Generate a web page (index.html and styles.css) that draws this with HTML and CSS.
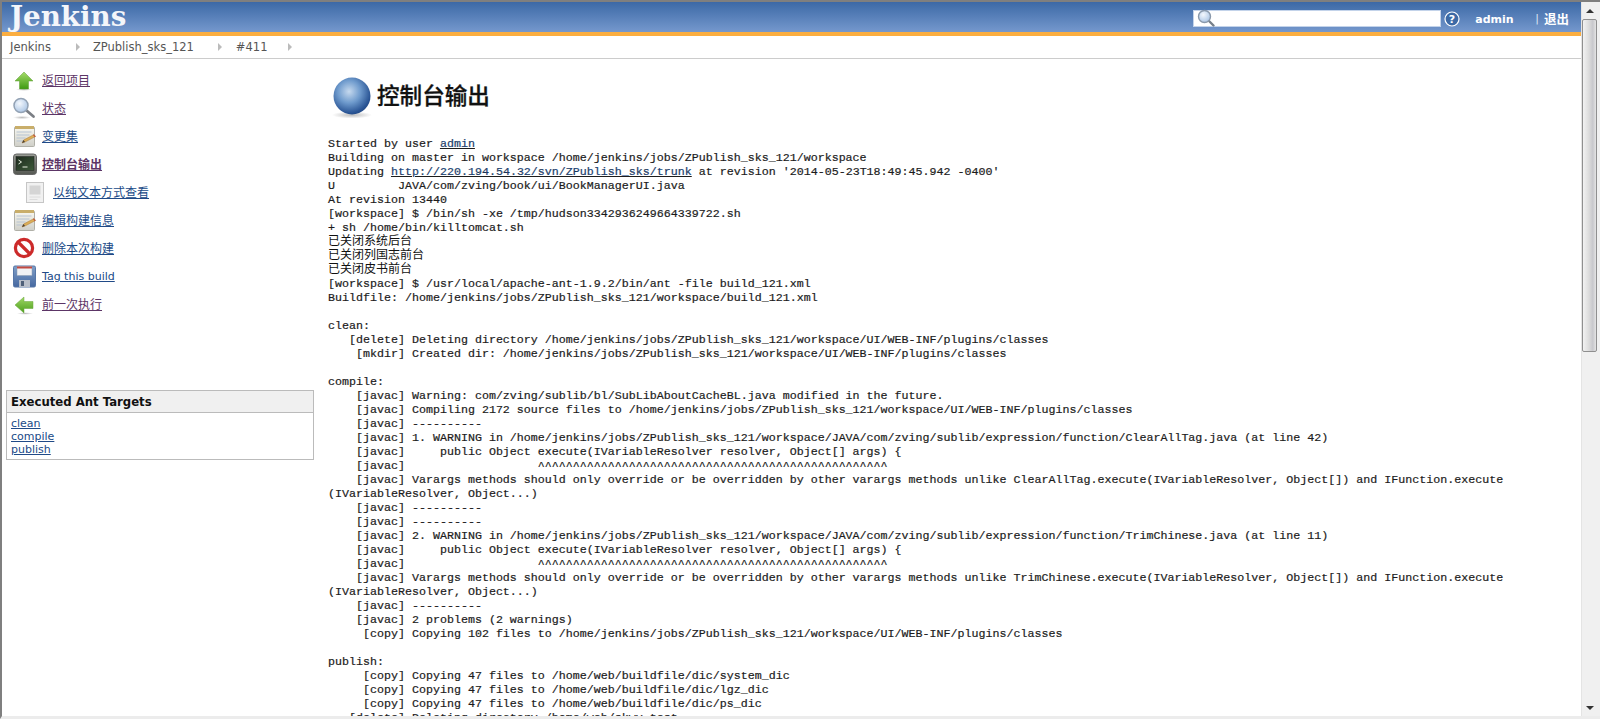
FILE: index.html
```html
<!DOCTYPE html>
<html lang="zh">
<head>
<meta charset="utf-8">
<title>ZPublish_sks_121 #411 Console</title>
<link rel="stylesheet" href="styles.css">
</head>
<body>
<svg class="defs" aria-hidden="true">
  <defs>
    <linearGradient id="gGreen" x1="0" y1="0" x2="0" y2="1"><stop offset="0" stop-color="#a5dc6a"/><stop offset="1" stop-color="#3f9a12"/></linearGradient>
    <linearGradient id="gGreenL" x1="0" y1="0" x2="0" y2="1"><stop offset="0" stop-color="#9fd864"/><stop offset="1" stop-color="#4c9e1c"/></linearGradient>
    <radialGradient id="gLens" cx=".4" cy=".35" r=".7"><stop offset="0" stop-color="#f4f8fd"/><stop offset="1" stop-color="#a9c4e4"/></radialGradient>
    <linearGradient id="gPaper" x1="0" y1="0" x2="0" y2="1"><stop offset="0" stop-color="#f9f8f0"/><stop offset="1" stop-color="#cfcfc8"/></linearGradient>
    <linearGradient id="gTerm" x1="0" y1="0" x2="0" y2="1"><stop offset="0" stop-color="#9a9e96"/><stop offset="1" stop-color="#555852"/></linearGradient>
    <linearGradient id="gScreen" x1="0" y1="0" x2="1" y2="1"><stop offset="0" stop-color="#1d2a1d"/><stop offset="1" stop-color="#3d5a3a"/></linearGradient>
    <linearGradient id="gDisk" x1="0" y1="0" x2="0" y2="1"><stop offset="0" stop-color="#7f9fc8"/><stop offset="1" stop-color="#4668a0"/></linearGradient>
    <radialGradient id="gBall" cx=".42" cy=".38" r=".68"><stop offset="0" stop-color="#c6d9ee"/><stop offset=".45" stop-color="#6f9bcd"/><stop offset=".85" stop-color="#2a5595"/><stop offset="1" stop-color="#1f447d"/></radialGradient>
    <radialGradient id="gShadow"><stop offset="0" stop-color="#999" stop-opacity=".65"/><stop offset="1" stop-color="#999" stop-opacity="0"/></radialGradient>
    <symbol id="iNotepad" viewBox="0 0 24 24">
      <rect x="1.5" y="3" width="20" height="19.5" rx="1" fill="url(#gPaper)" stroke="#b0b0a8"/>
      <rect x="2" y="2" width="19" height="3" fill="#c9ae6a"/>
      <path d="M3.5 8h15M3.5 11h13M3.5 14h9M3.5 17h7" stroke="#b7c4d2" stroke-width="1"/>
      <path d="M9 19l1.6-3L21 10.5l1.6 2L12 18z" fill="#dcae55" stroke="#a97a3c" stroke-width=".5"/>
      <path d="M20 11l1-.5 1.6 2-1 .6z" fill="#c2483e"/>
      <path d="M9 19l1.6-3 1.4 2z" fill="#4a4036"/>
    </symbol>
  </defs>
</svg>
<div class="window">
  <div class="page">
    <header class="topbar">
      <a class="logo">Jenkins</a>
      <div class="topbar-right">
        <div class="search">
          <svg class="search-icon" viewBox="0 0 18 18" width="18" height="18"><path d="M11.5 11.5l5 5" stroke="#77808a" stroke-width="2.4" stroke-linecap="round"/><circle cx="7.5" cy="7.5" r="6" fill="url(#gLens)" stroke="#8a99ab" stroke-width="1.4"/></svg>
        </div>
        <svg class="help" viewBox="0 0 16 16" width="16" height="16"><circle cx="8" cy="8" r="7" fill="#3d6aa6" stroke="#fff" stroke-width="1.2"/><text x="8" y="12" text-anchor="middle" class="help-q">?</text></svg>
        <a class="user">admin</a>
        <span class="sep">|</span>
        <a class="logout">退出</a>
      </div>
    </header>
    <div class="orange"></div>
    <nav class="crumbs">
      <a class="crumb c1">Jenkins</a><i class="arrow a1"></i>
      <a class="crumb c2">ZPublish_sks_121</a><i class="arrow a2"></i>
      <a class="crumb c3">#411</a><i class="arrow a3"></i>
    </nav>
    <div class="content">
      <aside class="side">
        <ul class="tasks">
          <li class="task">
            <svg class="ico" viewBox="0 0 24 24"><ellipse cx="11" cy="21.5" rx="8" ry="1.4" fill="url(#gShadow)"/><path d="M11 4l9 9h-4.5v8h-9v-8H2z" fill="url(#gGreen)" stroke="#5d9c32" stroke-width=".5"/></svg>
            <a class="link cn visited">返回项目</a>
          </li>
          <li class="task">
            <svg class="ico" viewBox="0 0 24 24"><ellipse cx="9" cy="21.5" rx="9" ry="1.6" fill="url(#gShadow)"/><path d="M13.5 14.5l7 6" stroke="#7b7f85" stroke-width="2.8" stroke-linecap="round"/><circle cx="8" cy="9.5" r="7" fill="url(#gLens)" stroke="#93a2b4" stroke-width="1.5"/></svg>
            <a class="link cn visited">状态</a>
          </li>
          <li class="task">
            <svg class="ico"><use href="#iNotepad"/></svg>
            <a class="link cn">变更集</a>
          </li>
          <li class="task">
            <svg class="ico" viewBox="0 0 24 24"><rect x="0.5" y="2" width="23" height="20.5" rx="3" fill="url(#gTerm)" stroke="#666"/><rect x="3" y="4.5" width="18" height="14" fill="url(#gScreen)" stroke="#222" stroke-width=".5"/><path d="M5.5 8l3 2-3 2" fill="none" stroke="#e8f0e0" stroke-width="1"/><path d="M9.5 15h5" stroke="#e8f0e0" stroke-width="1"/></svg>
            <a class="link cn visited strong">控制台输出</a>
          </li>
          <li class="task sub">
            <svg class="ico-sub" viewBox="0 0 18 21"><rect x=".5" y=".5" width="17" height="20" fill="#f1f1f1" stroke="#c6c6c6"/><rect x="3.5" y="3.5" width="11" height="9" fill="#d5d5d5"/><path d="M3.5 15h11M3.5 17.5h8" stroke="#dcdcdc"/></svg>
            <a class="link cn">以纯文本方式查看</a>
          </li>
          <li class="task">
            <svg class="ico"><use href="#iNotepad"/></svg>
            <a class="link cn">编辑构建信息</a>
          </li>
          <li class="task">
            <svg class="ico" viewBox="0 0 24 24"><circle cx="11" cy="12" r="8.6" fill="#fff" stroke="#cc2a2a" stroke-width="3.2"/><path d="M5 6l12 12" stroke="#cc2a2a" stroke-width="3.2"/></svg>
            <a class="link cn">删除本次构建</a>
          </li>
          <li class="task">
            <svg class="ico" viewBox="0 0 24 24"><rect x=".5" y="2" width="22" height="21" rx="1.5" fill="url(#gDisk)" stroke="#5676a6"/><rect x="4" y="2.5" width="15" height="9" fill="#f1f2f4" stroke="#8d9bb0" stroke-width=".5"/><rect x="4" y="2.5" width="15" height="2" fill="#c24a42"/><rect x="6" y="16" width="11" height="7" fill="#b9bfc9"/><rect x="8" y="17" width="3" height="5" fill="#4f6078"/></svg>
            <a class="link">Tag this build</a>
          </li>
          <li class="task">
            <svg class="ico" viewBox="0 0 24 24"><ellipse cx="12" cy="21.5" rx="8" ry="1.3" fill="url(#gShadow)"/><path d="M2 13l9-8v4.5h9v7h-9V21z" fill="url(#gGreenL)" stroke="#68a53c" stroke-width=".5"/></svg>
            <a class="link cn visited">前一次执行</a>
          </li>
        </ul>
        <section class="box">
          <h2 class="box-title">Executed Ant Targets</h2>
          <div class="box-body">
            <a class="box-link">clean</a>
            <a class="box-link">compile</a>
            <a class="box-link">publish</a>
          </div>
        </section>
      </aside>
      <main class="main">
        <h1 class="heading">
          <svg class="ball" viewBox="0 0 48 48" width="48" height="48"><ellipse cx="24" cy="43" rx="20" ry="3.5" fill="url(#gShadow)"/><circle cx="24" cy="24" r="18.5" fill="url(#gBall)"/></svg>
          <span>控制台输出</span>
        </h1>
<pre class="console">Started by user <a class="con-link">admin</a>
Building on master in workspace /home/jenkins/jobs/ZPublish_sks_121/workspace
Updating <a class="con-link">http://220.194.54.32/svn/ZPublish_sks/trunk</a> at revision '2014-05-23T18:49:45.942 -0400'
U         JAVA/com/zving/book/ui/BookManagerUI.java
At revision 13440
[workspace] $ /bin/sh -xe /tmp/hudson3342936249664339722.sh
+ sh /home/bin/killtomcat.sh
<span class="cjk">已关闭系统后台</span>
<span class="cjk">已关闭列国志前台</span>
<span class="cjk">已关闭皮书前台</span>
[workspace] $ /usr/local/apache-ant-1.9.2/bin/ant -file build_121.xml
Buildfile: /home/jenkins/jobs/ZPublish_sks_121/workspace/build_121.xml

clean:
   [delete] Deleting directory /home/jenkins/jobs/ZPublish_sks_121/workspace/UI/WEB-INF/plugins/classes
    [mkdir] Created dir: /home/jenkins/jobs/ZPublish_sks_121/workspace/UI/WEB-INF/plugins/classes

compile:
    [javac] Warning: com/zving/sublib/bl/SubLibAboutCacheBL.java modified in the future.
    [javac] Compiling 2172 source files to /home/jenkins/jobs/ZPublish_sks_121/workspace/UI/WEB-INF/plugins/classes
    [javac] ----------
    [javac] 1. WARNING in /home/jenkins/jobs/ZPublish_sks_121/workspace/JAVA/com/zving/sublib/expression/function/ClearAllTag.java (at line 42)
    [javac]     public Object execute(IVariableResolver resolver, Object[] args) {
    [javac]                   ^^^^^^^^^^^^^^^^^^^^^^^^^^^^^^^^^^^^^^^^^^^^^^^^^^
    [javac] Varargs methods should only override or be overridden by other varargs methods unlike ClearAllTag.execute(IVariableResolver, Object[]) and IFunction.execute
(IVariableResolver, Object...)
    [javac] ----------
    [javac] ----------
    [javac] 2. WARNING in /home/jenkins/jobs/ZPublish_sks_121/workspace/JAVA/com/zving/sublib/expression/function/TrimChinese.java (at line 11)
    [javac]     public Object execute(IVariableResolver resolver, Object[] args) {
    [javac]                   ^^^^^^^^^^^^^^^^^^^^^^^^^^^^^^^^^^^^^^^^^^^^^^^^^^
    [javac] Varargs methods should only override or be overridden by other varargs methods unlike TrimChinese.execute(IVariableResolver, Object[]) and IFunction.execute
(IVariableResolver, Object...)
    [javac] ----------
    [javac] 2 problems (2 warnings)
     [copy] Copying 102 files to /home/jenkins/jobs/ZPublish_sks_121/workspace/UI/WEB-INF/plugins/classes

publish:
     [copy] Copying 47 files to /home/web/buildfile/dic/system_dic
     [copy] Copying 47 files to /home/web/buildfile/dic/lgz_dic
     [copy] Copying 47 files to /home/web/buildfile/dic/ps_dic
   [delete] Deleting directory /home/web/skwy_test</pre>
      </main>
    </div>
  </div>
  <div class="scrollbar">
    <div class="sb-btn"><i class="sb-up"></i></div>
    <div class="sb-thumb"></div>
    <div class="sb-track"></div>
    <div class="sb-btn"><i class="sb-down"></i></div>
  </div>
</div>
</body>
</html>
```
FILE: styles.css
```css
* { box-sizing: border-box; }
html, body { margin: 0; padding: 0; height: 719px; overflow: hidden; background: #fff; }
body { font-family: "DejaVu Sans", "Noto Sans CJK SC", sans-serif; font-size: 11px; color: #333; }
.defs { display: block; width: 0; height: 0; }
a { cursor: pointer; }

.window {
  display: flex;
  height: 719px;
  border-top: 2px solid #7f7f7f;
  border-left: 2px solid #7f7f7f;
  border-bottom: 3px solid #ececec;
}
.page { flex: 1; min-width: 0; display: flex; flex-direction: column; overflow: hidden; }

.topbar {
  flex: none;
  height: 30px;
  display: flex;
  align-items: center;
  justify-content: space-between;
  background: linear-gradient(#3c69a6, #7598cd);
}
.logo {
  margin-left: 8px;
  font: bold 27.7px/30px "DejaVu Serif", "Liberation Serif", serif;
  color: #f4f6fa;
}
.topbar-right { display: flex; align-items: center; padding: 3px 12px 0 0; color: #fff; }
.search {
  width: 248px;
  height: 17px;
  background: #fff;
  border: 1px solid #c3d3ea;
  padding-left: 3px;
  display: flex;
  align-items: center;
}
.search-icon { display: block; flex: none; margin-top: -1px; }
.help { margin-left: 3px; display: block; }
.help-q { font: bold 11px "DejaVu Sans", sans-serif; fill: #fff; }
.user { margin-left: 15px; font-weight: bold; color: #fff; width: 40px; padding-top: 1px; }
.sep { margin-left: 20px; font-size: 11px; color: #dfe7f4; }
.logout { margin-left: 5px; font: bold 12.5px "Noto Sans CJK SC", sans-serif; color: #fff; }

.orange { flex: none; height: 4px; background: #fbae40; }

.crumbs {
  flex: none;
  height: 23px;
  border-bottom: 1px solid #ccc;
  display: flex;
  align-items: center;
  padding-left: 8px;
  background: #fff;
  font-size: 11.5px;
}
.crumb { color: #555; }
.arrow { width: 0; height: 0; border-left: 4px solid #bbb; border-top: 4px solid transparent; border-bottom: 4px solid transparent; }
.a1 { margin: 0 13px 0 25px; }
.a2 { margin: 0 13.5px 0 24.5px; }
.a3 { margin-left: 21px; }

.content { flex: 1; min-height: 0; display: flex; overflow: hidden; }
.side { flex: none; width: 318px; padding-top: 7px; }
.tasks { list-style: none; margin: 0; padding: 0; }
.task { height: 28px; display: flex; align-items: center; padding-left: 11px; }
.task.sub { padding-left: 24px; }
.ico { width: 24px; height: 24px; flex: none; margin-right: 5px; }
.ico-sub { width: 18px; height: 21px; flex: none; margin-right: 9px; }
.link { color: #204a87; text-decoration: underline; font-size: 11px; }
.cn { font-size: 12px; padding-bottom: 2px; }
.visited { color: #5c3566; }
.strong { font-weight: bold; }

.box { margin: 72px 0 0 4px; width: 308px; border: 1px solid #bbb; }
.box-title {
  margin: 0;
  height: 22px;
  padding: 0 4px;
  background: #f0f0f0;
  border-bottom: 1px solid #bbb;
  font-size: 11.7px;
  line-height: 22px;
  color: #111;
}
.box-body { padding: 4px 4px 3px; display: flex; flex-direction: column; align-items: flex-start; }
.box-link { color: #204a87; text-decoration: underline; line-height: 13px; font-size: 11px; }

.main { flex: 1; min-width: 0; padding: 13px 0 0 8px; }
.heading {
  margin: 0;
  height: 48px;
  display: flex;
  align-items: center;
  gap: 1px;
  padding-bottom: 2px;
  font: 500 22.6px/46px "Noto Sans CJK SC", sans-serif;
  color: #111;
  -webkit-text-stroke: .3px #111;
}
.ball { flex: none; display: block; margin-bottom: -2px; }
.console {
  margin: 16px 0 0;
  padding-top: 1px;
  font: 11.667px/14px "Liberation Mono", "Noto Sans CJK SC", monospace;
  color: #1c1c1c;
  white-space: pre;
  -webkit-text-stroke: .2px #1c1c1c;
}
.cjk { font: 12px/0 "Noto Sans CJK SC", sans-serif; -webkit-text-stroke: 0; color: #111; }
.con-link { color: #204a87; text-decoration: underline; }

.scrollbar {
  flex: none;
  width: 19px;
  display: flex;
  flex-direction: column;
  background: #f0f0f0;
  border-left: 1px solid #e4e4e4;
  padding-right: 2px;
}
.sb-btn { flex: none; height: 17px; display: flex; align-items: center; justify-content: center; }
.sb-up { width: 0; height: 0; border: 4px solid transparent; border-top: 0; border-bottom: 4px solid #333; }
.sb-down { width: 0; height: 0; border: 4px solid transparent; border-bottom: 0; border-top: 4px solid #333; }
.sb-thumb {
  flex: none;
  height: 333px;
  margin-right: 1px;
  border: 1px solid #8f8f8f;
  border-radius: 2px;
  background: linear-gradient(90deg, #f2f2f2, #dcdcdc 45%, #c8c8cc 75%, #e4e4e4);
}
.sb-track { flex: 1; }
```
